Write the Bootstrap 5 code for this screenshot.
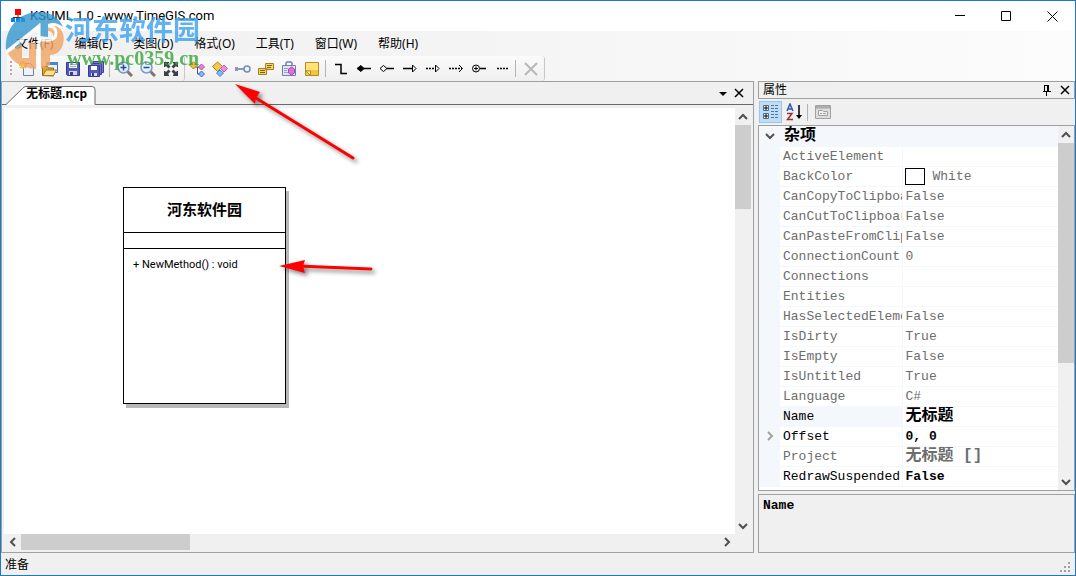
<!DOCTYPE html>
<html lang="zh-CN">
<head>
<meta charset="utf-8">
<meta name="viewport" content="width=device-width, initial-scale=1">
<title>KSUML 1.0</title>
<link href="https://cdn.jsdelivr.net/npm/bootstrap@5.3.0/dist/css/bootstrap.min.css" rel="stylesheet">
<style>
:root{--face:#f0f0f0;--edge:#a0a0a0;--tint:#f4f7fc}
body{font:12px/16px "Noto Sans","Noto Sans CJK SC",sans-serif;color:#000;background:var(--face)}
button{border:0;background:none;padding:0;color:inherit;display:flex;align-items:center;justify-content:center}
svg{display:block;flex:none}
.app-window{border:1px solid #1979ca;min-height:100vh}
.title-bar{height:30px;background:#fff;padding-left:9px}
.title-bar h1{font:13px/20px Roboto,"Noto Sans",sans-serif;margin:0 0 0 4px}
.win-btn{width:46px;height:30px}
.chrome-bg{background:linear-gradient(90deg,#f0f0f0,#f5f5f5 50%,#fcfcfc)}
.menu-bar{height:25px;padding-left:5px}
.menu-bar a{color:#000;text-decoration:none;padding:4px 11px 4px 10px}
.tool-row{height:25px;padding-left:6px}
.tool-strip{height:25px;background:linear-gradient(#fbfbfb,#efefef);border-right:1px solid #c8c8c8;border-radius:0 3px 3px 0;padding-right:2px}
.tool-strip button{width:23px;height:23px}
.tool-rule{width:1px;height:17px;background:#b4b4b4;margin:0 3px 0 2px}
.pane{border:1px solid var(--edge)}
.tab-strip{height:23px}
.tab-line{border-bottom:1px solid #696969}
.doc-tab{width:89px;height:19px;position:relative}
.doc-tab svg{position:absolute;left:0;top:0}
.doc-tab span{position:relative;font-weight:700;margin-left:12px;padding-bottom:3px;line-height:16px}
.doc-wrap{padding:3px 2px 2px}
.sheet{background:#fff;overflow:hidden}
.bar-v{width:16px;flex:none}
.bar-v button{width:100%;height:17px}
.bar-h{height:16px}
.bar-h button{width:17px;height:100%}
.thumb{background:#cdcdcd}
.uml-class{position:absolute;left:119px;top:79px;width:163px;height:217px;border:1px solid #000;background:#fff;box-shadow:3px 4px 0 #b8b8b8}
.uml-name{height:45px;font-size:15px;font-weight:700;border-bottom:1px solid #000;padding-bottom:2px}
.uml-fields{height:16px;border-bottom:1px solid #000}
.uml-methods{padding:8px 9px;font-family:Roboto,"Noto Sans",sans-serif;font-size:11px}
.dock{width:317px}
.dock-title{height:18px;padding:0 4px}
.dock-tools{height:26px;padding:0 1px}
.dock-tools button{width:23px;height:22px}
.dock-tools .on{background:#c2ddf2;border:1px solid #90c8f6}
.grid-pane{flex:1 1 0;min-height:0}
.grid-view{overflow:hidden;background:#fff}
.prop-table{width:100%;table-layout:fixed;border-collapse:collapse;font:13px/19px "Liberation Mono","Noto Sans CJK SC",monospace;color:#6d6d6d}
.prop-table th,.prop-table td{height:20px;padding:0 0 0 3px;border-bottom:1px solid var(--tint);font-weight:400;white-space:nowrap;overflow:hidden}
.prop-table th:first-child,.prop-table .cat{background:var(--tint);padding:0}
.prop-table .name{border-right:1px solid var(--tint)}
.prop-table .cat{color:#000;font-size:16px;font-weight:700}
.prop-table .cat-name{padding-top:2px;line-height:17px}
.prop-table .live{color:#000}
.prop-table .big{font-size:16px;font-weight:700}
.prop-table .bold{font-weight:700}
.prop-table .picked{background:var(--tint)}
.swatch{display:inline-block;width:20px;height:17px;border:1px solid #000;vertical-align:top;margin:1px 8px 0 -1px;background:#fff}
.help-pane{height:59px;margin-top:3px;padding:2px 4px;font:700 13px/18px "Liberation Mono",monospace}
.status{height:22px;padding:2px 4px}
.mark-over{position:absolute;pointer-events:none}
.wm-logo{left:4px;top:10px;opacity:.8}
.wm-name{left:64px;top:11px;font:700 27px/34px "Noto Sans CJK SC",sans-serif;color:#3ba0ee;opacity:.8}
.wm-site{left:66px;top:45px;font:700 20px/24px "Liberation Serif",serif;color:#37a537;opacity:.8}
.arrow-a{left:228px;top:77px}
.arrow-b{left:271px;top:253px}
</style>
<script src="https://cdn.jsdelivr.net/npm/bootstrap@5.3.0/dist/js/bootstrap.bundle.min.js"></script>
</head>
<body>
<div class="app-window d-flex flex-column position-relative">
<header class="title-bar d-flex align-items-center">
 <svg width="16" height="16" viewBox="0 0 16 16"><path fill="#f00" d="M5 1h6v6H5z"/><path fill="none" stroke="#333" d="M8 7v3M3 11V9.500h10V11"/><path fill="#0a7bea" d="M1 10h4v4H1zM6 10h4v4H6zM11 10h4v4h-4z"/></svg>
 <h1>KSUML 1.0 - www.TimeGIS.com</h1>
 <div class="d-flex ms-auto">
  <button class="win-btn" aria-label="最小化"><svg width="10" height="10" stroke="#000"><path d="M0 4.500h10"/></svg></button>
  <button class="win-btn" aria-label="最大化"><svg width="10" height="10" fill="none" stroke="#000"><path d="M.5.5h9v9h-9z"/></svg></button>
  <button class="win-btn" aria-label="关闭"><svg width="11" height="11" stroke="#000"><path d="M.5.500l10 10M10.500.500l-10 10"/></svg></button>
 </div>
</header>
<nav class="menu-bar chrome-bg d-flex align-items-center">
 <a href="#">文件(F)</a><a href="#">编辑(E)</a><a href="#">类图(D)</a><a href="#">格式(O)</a><a href="#">工具(T)</a><a href="#">窗口(W)</a><a href="#">帮助(H)</a>
</nav>
<div class="tool-row chrome-bg d-flex">
 <div class="tool-strip d-flex align-items-center">
  <svg width="8" height="17" fill="#b0b0b0"><path d="M3 1h2v2H3zM3 5h2v2H3zM3 9h2v2H3zM3 13h2v2H3z"/></svg>
  <button aria-label="新建"><svg width="16" height="16" viewBox="0 0 16 16"><path fill="#eef3fd" stroke="#6a7fae" d="M4.500 2.500h7l3 3v9h-10z"/><path fill="#cbd8f0" d="M11 3v3h3z"/><path stroke="#f0b41c" stroke-width="1.500" d="M4 0v8M0 4h8M1 1l6 6M7 1L1 7"/><circle cx="4" cy="4" r="1.500" fill="#fff6b8"/></svg></button>
  <button aria-label="打开"><svg width="16" height="16" viewBox="0 0 16 16"><path fill="#e8f1fc" stroke="#47699e" d="M4.500 1.500h11v10h-11z"/><path fill="#4b84cf" d="M4 1h12v3H4z"/><path fill="#d9a53a" stroke="#946819" d="M.5 14.500v-9h5l1 1.500h5v8z"/><path fill="#ffe08a" stroke="#a87a22" d="M1 14.500l3-5.500h10.500l-3 5.500z"/></svg></button>
  <button aria-label="保存"><svg width="16" height="16" viewBox="0 0 16 16"><path fill="#5658b8" stroke="#383b92" d="M1.500 1.500h13v13h-12l-1-1z"/><path fill="#f3f5ff" d="M4 2h8v5H4z"/><path stroke="#a5abd8" d="M5 3.500h6M5 5.500h6"/><path fill="#d5d8ef" d="M4 10h8v4H4z"/><path fill="#3a3c8a" d="M5 11h3v3H5z"/></svg></button>
  <button aria-label="全部保存"><svg width="16" height="16" viewBox="0 0 16 16"><path fill="#7b7dd0" stroke="#3f429a" d="M5.500.500h10v11h-10z"/><path fill="#7073c6" stroke="#3f429a" d="M3.500 2.500h10v11h-10z"/><path fill="#5658b8" stroke="#383b92" d="M.5 4.500h11v11H.5z"/><path fill="#fff" d="M3 5h6v4H3z"/><path fill="#d5d8ef" d="M3 12h6v3H3z"/><path fill="#3a3c8a" d="M4 12h2v3H4z"/></svg></button>
  <span class="tool-rule"></span>
  <button aria-label="放大"><svg width="16" height="16" viewBox="0 0 16 16"><path stroke="#80756b" stroke-width="3" d="M10 10l5 5"/><circle cx="6.500" cy="6.500" r="5.500" fill="#e4efff" stroke="#7d98c5" stroke-width="1.500"/><path stroke="#24489f" stroke-width="1.500" d="M3.500 6.500h6M6.500 3.500v6"/></svg></button>
  <button aria-label="缩小"><svg width="16" height="16" viewBox="0 0 16 16"><path stroke="#80756b" stroke-width="3" d="M10 10l5 5"/><circle cx="6.500" cy="6.500" r="5.500" fill="#e4efff" stroke="#7d98c5" stroke-width="1.500"/><path stroke="#24489f" stroke-width="1.500" d="M3.500 6.500h6"/></svg></button>
  <button aria-label="适合窗口"><svg width="16" height="16" viewBox="0 0 16 16"><path fill="#3d4046" d="M1 1h5v1L5 3l2.500 2.500-2 2L3 5 2 6H1zM15 1h-5v1l1 1-2.500 2.500 2 2L13 5l1 1h1zM1 15h5v-1l-1-1 2.500-2.500-2-2L3 11l-1-1H1zM15 15h-5v-1l1-1-2.500-2.500 2-2L13 11l1-1h1z"/></svg></button>
 </div>
 <div class="tool-strip d-flex align-items-center">
  <button aria-label="类关系"><svg width="16" height="16" viewBox="0 0 16 16"><path fill="none" stroke="#555" d="M6 6h6M8.500 6v7H12"/><path fill="#f0c23a" stroke="#a87a1c" d="M4.500 1l4 3-4 4-4-4z"/><path fill="#e780e4" stroke="#a553ac" d="M12.500 3l3 3-3 3-3-3z"/><path fill="#7fb8ff" stroke="#3c6fc4" d="M12.500 10l3 3-3 3-3-3z"/></svg></button>
  <button aria-label="新建类"><svg width="16" height="16" viewBox="0 0 16 16"><path fill="#f6c94a" stroke="#a8801f" d="M5.500 1l5 4.500-5 5-5-5z"/><path fill="#ed8de8" stroke="#b35fbb" d="M12 4l3.500 3.500L12 11 8.500 7.500z"/><path fill="#7cbcff" stroke="#3d7cd4" d="M8 9l3.500 3-3.500 3.500L4.500 12z"/></svg></button>
  <button aria-label="新建接口"><svg width="16" height="16" viewBox="0 0 16 16"><path stroke="#8b98b4" stroke-width="2" d="M1 8h9"/><path fill="#8b98b4" d="M0 6h3v4H0z"/><circle cx="12" cy="8" r="3" fill="#eef3fb" stroke="#7a8bad" stroke-width="1.500"/></svg></button>
  <button aria-label="新建枚举"><svg width="16" height="16" viewBox="0 0 16 16"><path fill="#f5d568" stroke="#a67c24" d="M7.500 2.500h8v6h-8zM.5 7.500h8v6h-8z"/><path stroke="#80611c" d="M9 4.500h5M9 6.500h4M2 9.500h5M2 11.500h5"/></svg></button>
  <button aria-label="新建包"><svg width="16" height="16" viewBox="0 0 16 16"><path fill="none" stroke="#7280a2" stroke-width="1.500" d="M5 4V2l1-1h4l1 1v2"/><path fill="#dfe6f5" stroke="#7280a2" d="M1.500 4.500h13v10h-13z"/><path stroke="#9aa6c3" d="M3 7.500h4M3 9.500h3M3 11.500h4"/><path fill="#e36cdf" stroke="#a84aae" d="M10.500 6l3 2v4l-3 2-3-2V8z"/></svg></button>
  <button aria-label="注释"><svg width="16" height="16" viewBox="0 0 16 16"><path fill="#ffe27a" stroke="#b58b1d" d="M1.500 1.500h13v13h-13z"/><path fill="#f3c637" d="M2 9h12v5H2z"/><path fill="#fff8c8" stroke="#b58b1d" d="M2 10h4.500v4.500z"/></svg></button>
  <span class="tool-rule"></span>
  <button aria-label="关联"><svg width="16" height="16" fill="none" stroke="#000" stroke-width="1.500"><path d="M2 3.500h6v9h6"/></svg></button>
  <button aria-label="组合"><svg width="16" height="16" stroke="#000"><path stroke-width="1.500" d="M7 7.500h8"/><path d="M1 7.500l4-3 3 3-3 3z"/></svg></button>
  <button aria-label="聚合"><svg width="16" height="16" fill="none" stroke="#000"><path stroke-width="1.500" d="M8 7.500h7"/><path d="M1 7.500l3.500-3 3.500 3-3.500 3z"/></svg></button>
  <button aria-label="泛化"><svg width="16" height="16" fill="none" stroke="#000"><path stroke-width="1.500" d="M1 7.500h9"/><path d="M10.500 4l3.500 3.500-3.500 3.500z"/></svg></button>
  <button aria-label="实现"><svg width="16" height="16" fill="none" stroke="#000"><path stroke-width="1.500" stroke-dasharray="2 1" d="M1 7.500h9"/><path d="M10.500 4l3.500 3.500-3.500 3.500z"/></svg></button>
  <button aria-label="依赖"><svg width="16" height="16" fill="none" stroke="#000"><path stroke-width="1.500" stroke-dasharray="2 1" d="M1 7.500h13"/><path d="M11 4l3.500 3.500L11 11"/></svg></button>
  <button aria-label="嵌套"><svg width="16" height="16" fill="none" stroke="#000"><circle cx="5" cy="7.500" r="3.500"/><path d="M3 7.500h4M5 5.500v4"/><path stroke-width="1.500" d="M9 7.500h6"/></svg></button>
  <button aria-label="注释连线"><svg width="16" height="16" fill="none" stroke="#000"><path stroke-width="1.500" stroke-dasharray="2 1" d="M3 7.500h11"/></svg></button>
  <span class="tool-rule"></span>
  <button aria-label="删除"><svg width="16" height="16" stroke="#b8b8b8" stroke-width="2"><path d="M2 2l12 12M14 2L2 14"/></svg></button>
 </div>
</div>
<main class="d-flex flex-grow-1 gap-1">
 <section class="pane flex-grow-1 d-flex flex-column">
  <div class="tab-strip d-flex align-items-end">
   <div class="tab-line ps-1 align-self-stretch"></div>
   <button class="doc-tab"><svg width="90" height="19"><path fill="#fff" stroke="#696969" d="M0 18.500L16.500 2.500Q18 .500 20 .500h66q3 0 3 3v15"/><path stroke="#fff" stroke-width="2" d="M2 18.500h86"/></svg><span>无标题.ncp</span></button>
   <div class="tab-line flex-grow-1 align-self-stretch d-flex justify-content-end align-items-center gap-1 pe-2">
    <button aria-label="文档列表"><svg width="14" height="12"><path d="M3 5h8L7 9z"/></svg></button>
    <button aria-label="关闭文档"><svg width="11" height="10" stroke="#000" stroke-width="1.500"><path d="M1 1l8 8M9 1L1 9"/></svg></button>
   </div>
  </div>
  <div class="doc-wrap d-flex flex-column flex-grow-1">
   <div class="d-flex flex-grow-1">
    <div class="sheet flex-grow-1 position-relative">
     <article class="uml-class">
      <div class="uml-name d-flex align-items-center justify-content-center">河东软件园</div>
      <div class="uml-fields"></div>
      <div class="uml-methods">+ NewMethod() : void</div>
     </article>
    </div>
    <div class="bar-v d-flex flex-column">
     <button aria-label="向上"><svg width="10" height="8" fill="none" stroke="#505050" stroke-width="2"><path d="M1 6l4-4 4 4"/></svg></button>
     <div class="thumb" style="height:84px"></div>
     <button class="mt-auto" aria-label="向下"><svg width="10" height="8" fill="none" stroke="#505050" stroke-width="2"><path d="M1 2l4 4 4-4"/></svg></button>
    </div>
   </div>
   <div class="bar-h d-flex pe-3">
    <button aria-label="向左"><svg width="8" height="10" fill="none" stroke="#505050" stroke-width="2"><path d="M6 1L2 5l4 4"/></svg></button>
    <div class="thumb" style="width:169px"></div>
    <button class="ms-auto" aria-label="向右"><svg width="8" height="10" fill="none" stroke="#505050" stroke-width="2"><path d="M2 1l4 4-4 4"/></svg></button>
   </div>
  </div>
 </section>
 <aside class="dock flex-shrink-0 d-flex flex-column">
  <div class="dock-title pane d-flex align-items-center">
   <span>属性</span>
   <button class="ms-auto" aria-label="自动隐藏"><svg width="10" height="12" fill="none" stroke="#000"><path d="M2.500 1v6M2 1.500h5M1 7.500h8M4.500 8v4"/><path stroke-width="2" d="M6 1v6"/></svg></button>
   <button class="ms-2" aria-label="关闭属性"><svg width="10" height="10" stroke="#000" stroke-width="1.500"><path d="M1 1l8 8M9 1L1 9"/></svg></button>
  </div>
  <div class="dock-tools d-flex align-items-center">
   <button class="on" aria-label="按分类"><svg width="16" height="16"><path fill="#fff" stroke="#4c6a94" d="M.5 1.500h5v5h-5zM.5 9.500h5v5h-5z"/><path stroke="#000" d="M1 4h4M3 2v4M1 12h4M3 10v4"/><path stroke="#4b76a9" stroke-dasharray="3 1" d="M8 1.500h8M8 4.500h8M8 7.500h8M8 10.500h8M8 13.500h8"/></svg></button>
   <button aria-label="按字母"><svg width="16" height="18"><path fill="none" stroke="#2c59b5" stroke-width="1.500" d="M1 8l3-7 3 7M2 6h4"/><path fill="none" stroke="#9c2f35" stroke-width="1.500" d="M1 10.500h5L1.500 16.500H7"/><path stroke="#000" stroke-width="1.500" d="M13 2v12"/><path d="M10 12h6l-3 4z"/></svg></button>
   <span class="tool-rule"></span>
   <button aria-label="属性页" disabled><svg width="16" height="16" fill="#ddd" stroke="#a2a2a2"><path d="M.5 1.500h15v13H.5z"/><path fill="#b8b8b8" d="M1 2h14v2H1z"/><path fill="#eee" d="M3.500 6.500h4l1 1h4v4h-9z"/><path d="M5 9.500h2M8 9.500h3"/></svg></button>
  </div>
  <div class="grid-pane pane d-flex">
   <div class="grid-view flex-grow-1">
    <table class="prop-table">
     <colgroup><col style="width:21px"><col style="width:122px"><col></colgroup>
     <tbody>
     <tr><th class="cat"><svg class="m-auto" width="10" height="8" fill="none" stroke="#505050" stroke-width="2"><path d="M1 2l4 4 4-4"/></svg></th><th class="cat cat-name ps-1" colspan="2">杂项</th></tr>
     <tr><th></th><td class="name">ActiveElement</td><td></td></tr>
     <tr><th></th><td class="name">BackColor</td><td><span class="swatch"></span>White</td></tr>
     <tr><th></th><td class="name">CanCopyToClipboard</td><td>False</td></tr>
     <tr><th></th><td class="name">CanCutToClipboard</td><td>False</td></tr>
     <tr><th></th><td class="name">CanPasteFromClipboard</td><td>False</td></tr>
     <tr><th></th><td class="name">ConnectionCount</td><td>0</td></tr>
     <tr><th></th><td class="name">Connections</td><td></td></tr>
     <tr><th></th><td class="name">Entities</td><td></td></tr>
     <tr><th></th><td class="name">HasSelectedElement</td><td>False</td></tr>
     <tr><th></th><td class="name">IsDirty</td><td>True</td></tr>
     <tr><th></th><td class="name">IsEmpty</td><td>False</td></tr>
     <tr><th></th><td class="name">IsUntitled</td><td>True</td></tr>
     <tr><th></th><td class="name">Language</td><td>C#</td></tr>
     <tr class="live"><th></th><td class="name picked">Name</td><td class="big">无标题</td></tr>
     <tr class="live"><th><svg class="m-auto" width="8" height="10" fill="none" stroke="#a0a0a0" stroke-width="2"><path d="M2 1l4 4-4 4"/></svg></th><td class="name">Offset</td><td class="bold">0, 0</td></tr>
     <tr><th></th><td class="name">Project</td><td class="big">无标题 []</td></tr>
     <tr class="live"><th></th><td class="name">RedrawSuspended</td><td class="bold">False</td></tr>
     </tbody>
    </table>
   </div>
   <div class="bar-v d-flex flex-column">
    <button aria-label="向上滚动"><svg width="10" height="8" fill="none" stroke="#505050" stroke-width="2"><path d="M1 6l4-4 4 4"/></svg></button>
    <div class="thumb" style="height:220px"></div>
    <button class="mt-auto" aria-label="向下滚动"><svg width="10" height="8" fill="none" stroke="#505050" stroke-width="2"><path d="M1 2l4 4 4-4"/></svg></button>
   </div>
  </div>
  <div class="help-pane pane">Name</div>
 </aside>
</main>
<footer class="status d-flex justify-content-between align-items-end"><span>准备</span>
 <svg width="12" height="12" fill="#a0a0a0"><path d="M9 1h2v2H9zM5 5h2v2H5zM9 5h2v2H9zM1 9h2v2H1zM5 9h2v2H5zM9 9h2v2H9z"/></svg>
</footer>
<svg class="mark-over wm-logo" width="60" height="60" viewBox="0 0 60 60">
 <path fill="#3297cf" d="M1 40C-1 18 13 1 34 1c12 0 20 6 24 15-5-4-10-5-15-3v13l-8-1V12L16 29v12h-6v-7L1 40z"/>
 <path fill="#f2a462" d="M3 42l14-9v14h7V32h7v26C17 57 7 51 3 42zM36 58V30h6c8 0 8-10 1-10V15c13-3 19 9 14 21-2 5-7 8-12 8v10z"/>
 <path fill="none" stroke="#fff" stroke-width="3" d="M1 41l33-26v43M34 29h9q8 0 8-7t-8-7"/>
</svg>
<div class="mark-over wm-name">河东软件园</div>
<div class="mark-over wm-site">www.pc0359.cn</div>
<svg class="mark-over arrow-a" width="140" height="96"><g style="filter:drop-shadow(3px 3px 2px #0007)"><path stroke="red" stroke-width="3" stroke-linecap="round" d="M22 17l102 63"/><path fill="red" d="M6 6l25 8-4 6-1 6z"/></g></svg>
<svg class="mark-over arrow-b" width="112" height="32"><g style="filter:drop-shadow(3px 3px 2px #0007)"><path stroke="red" stroke-width="3" stroke-linecap="round" d="M26 12l73 3"/><path fill="red" d="M7 12l26-6-2 6 2 7z"/></g></svg>
</div>
</body>
</html>
